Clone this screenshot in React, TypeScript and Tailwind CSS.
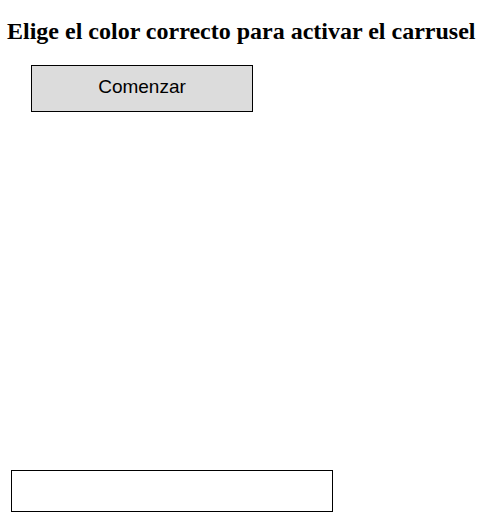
import React from 'react';

export default function App() {
  return (
    <div className="w-[497px] h-[526px] bg-white flex flex-col">
      <h2 className="font-['Liberation_Serif',serif] font-bold text-[24px] leading-[28px] text-black pl-[7px] pt-[17px]">
        Elige el color correcto para activar el carrusel
      </h2>

      <button className="ml-[31px] mt-[20px] w-[222px] h-[47px] pb-[2px] bg-[#dcdcdc] border border-black font-['Liberation_Sans',Arial,sans-serif] text-[19px] text-black">
        Comenzar
      </button>

      <div className="mt-auto mb-[14px] ml-[11px] w-[322px] h-[42px] border border-black" />
    </div>
  );
}
